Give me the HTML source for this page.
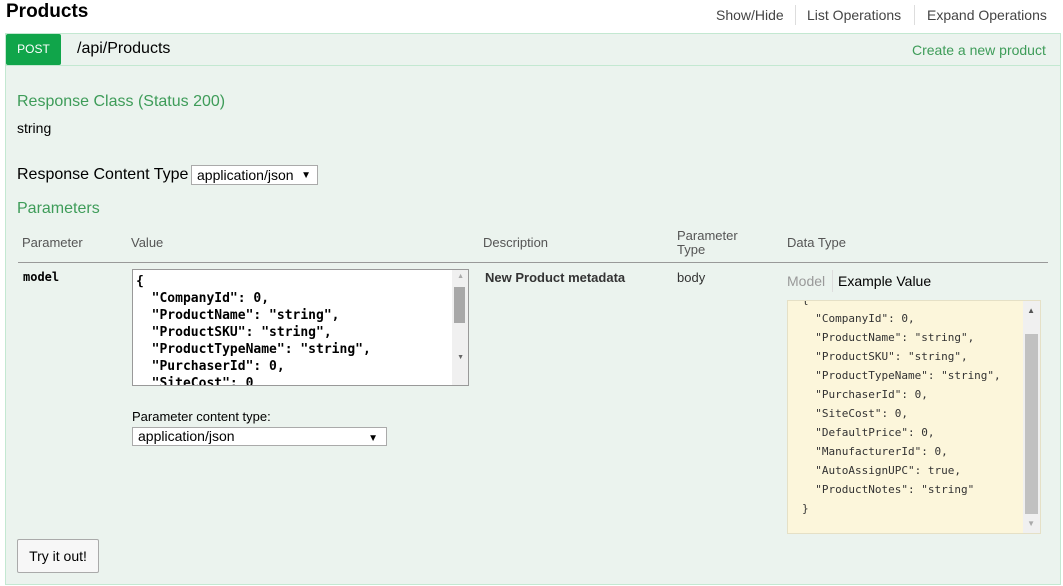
<!DOCTYPE html>
<html><head><meta charset="utf-8"><style>
*{box-sizing:border-box}
body{margin:0;width:1063px;height:586px;background:#fff;font-family:"Liberation Sans",Arial,sans-serif;position:relative;overflow:hidden;color:#000}
.a{position:absolute;white-space:nowrap}
.g{color:#3e9c59}
.mono{font-family:"DejaVu Sans Mono","Liberation Mono",monospace}
</style></head><body>
<div class="a" style="left:6px;top:1px;font-size:19px;font-weight:bold">Products</div>
<div class="a" style="left:716px;top:7px;font-size:14px;color:#444">Show/Hide</div>
<div class="a" style="left:795px;top:5px;width:1px;height:20px;background:#ddd"></div>
<div class="a" style="left:807px;top:7px;font-size:14px;color:#444">List Operations</div>
<div class="a" style="left:914px;top:5px;width:1px;height:20px;background:#ddd"></div>
<div class="a" style="left:927px;top:7px;font-size:14px;color:#444">Expand Operations</div>

<div class="a" style="left:5px;top:33px;width:1056px;height:552px;background:#ebf3ee;border:1px solid #c3e8d1"></div>
<div class="a" style="left:6px;top:65px;width:1054px;height:1px;background:#c3e8d1"></div>
<div class="a" style="left:6px;top:34px;width:55px;height:31px;background:#10a54a;border-radius:2px;color:#fff;font-size:12px;line-height:31px;text-align:center">POST</div>
<div class="a" style="left:77px;top:40px;font-size:16px;color:#000">/api/Products</div>
<div class="a g" style="left:912px;top:42px;font-size:14px">Create a new product</div>

<div class="a g" style="left:17px;top:93px;font-size:16px">Response Class (Status 200)</div>
<div class="a" style="left:17px;top:120px;font-size:14px">string</div>
<div class="a" style="left:17px;top:166px;font-size:16px">Response Content Type</div>
<div class="a" style="left:191px;top:165px;width:127px;height:20px;border:1px solid #aaa;background:#fff;font-size:14px;padding:1px 5px">application/json <span style="font-size:10px;position:absolute;right:6px;top:4px">▼</span></div>
<div class="a g" style="left:17px;top:200px;font-size:16px">Parameters</div>

<div class="a" style="left:22px;top:235px;font-size:13px;color:#555">Parameter</div>
<div class="a" style="left:131px;top:235px;font-size:13px;color:#555">Value</div>
<div class="a" style="left:483px;top:235px;font-size:13px;color:#555">Description</div>
<div class="a" style="left:677px;top:229px;font-size:13px;color:#555;line-height:14px">Parameter<br>Type</div>
<div class="a" style="left:787px;top:235px;font-size:13px;color:#555">Data Type</div>
<div class="a" style="left:18px;top:262px;width:1030px;height:1px;background:#999"></div>

<div class="a mono" style="left:23px;top:270px;font-size:12px;font-weight:bold">model</div>
<div class="a" style="left:132px;top:269px;width:337px;height:117px;border:1px solid #999;background:#fff;overflow:hidden">
<div class="a mono" style="left:3px;top:3px;font-size:13px;font-weight:bold;line-height:17px;white-space:pre">{
  "CompanyId": 0,
  "ProductName": "string",
  "ProductSKU": "string",
  "ProductTypeName": "string",
  "PurchaserId": 0,
  "SiteCost": 0</div>
<div class="a" style="right:0;top:0;width:16px;height:115px;background:#f0f0f0"></div>
<div class="a" style="right:3px;top:17px;width:11px;height:36px;background:#a8a8a8"></div>
<div class="a" style="right:4px;top:3px;font-size:7px;color:#aaa">▲</div>
<div class="a" style="right:4px;top:84px;font-size:7px;color:#666">▼</div>
</div>
<div class="a" style="left:132px;top:409px;font-size:13px">Parameter content type:</div>
<div class="a" style="left:132px;top:427px;width:255px;height:19px;border:1px solid #aaa;background:#fff;font-size:14px;padding:0 5px;line-height:17px">application/json<span style="font-size:10px;position:absolute;right:8px;top:2px">▼</span></div>

<div class="a" style="left:485px;top:270px;font-size:13px;font-weight:bold;color:#333">New Product metadata</div>
<div class="a" style="left:677px;top:270px;font-size:13px;color:#333">body</div>

<div class="a" style="left:787px;top:273px;font-size:14px;color:#999">Model</div>
<div class="a" style="left:832px;top:270px;width:1px;height:22px;background:#ddd"></div>
<div class="a" style="left:838px;top:273px;font-size:14px;color:#000">Example Value</div>
<div class="a" style="left:787px;top:300px;width:254px;height:234px;background:#fcf6db;border:1px solid #e5e0c6;overflow:hidden">
<div class="a mono" style="left:14px;top:-11px;font-size:11px;line-height:19px;white-space:pre;color:#333">{
  "CompanyId": 0,
  "ProductName": "string",
  "ProductSKU": "string",
  "ProductTypeName": "string",
  "PurchaserId": 0,
  "SiteCost": 0,
  "DefaultPrice": 0,
  "ManufacturerId": 0,
  "AutoAssignUPC": true,
  "ProductNotes": "string"
}</div>
<div class="a" style="right:0;top:0;width:17px;height:232px;background:#f0f0f0"></div>
<div class="a" style="right:2px;top:33px;width:13px;height:180px;background:#c1c1c1"></div>
<div class="a" style="right:5px;top:5px;font-size:8px;color:#555">▲</div>
<div class="a" style="right:5px;top:218px;font-size:8px;color:#aaa">▼</div>
</div>

<div class="a" style="left:17px;top:539px;width:82px;height:34px;border:1px solid #aaa;border-radius:2px;background:#f7f7f7;font-size:14px;line-height:32px;text-align:center">Try it out!</div>
</body></html>
